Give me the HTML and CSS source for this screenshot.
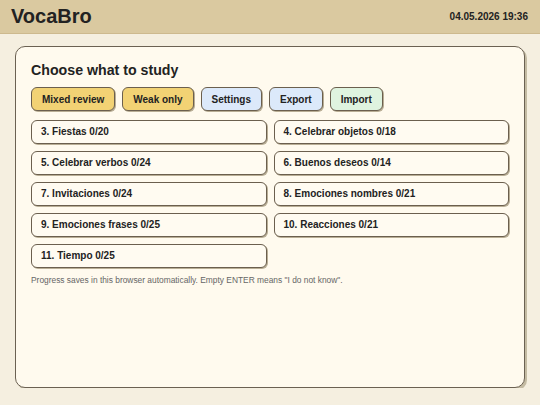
FILE: index.html
```html
<!DOCTYPE html>
<html lang="en">
<head>
    <meta charset="UTF-8">
    <title>VocaBro</title>
    <link rel="stylesheet" href="styles.css">
</head>
<body>
<div id="header">
    <h1>VocaBro</h1>
    <span id="clock">04.05.2026 19:36</span>
</div>
<div id="main">
    <div id="panel">
        <h2>Choose what to study</h2>
        <div id="actions">
            <button class="btn btn-yellow">Mixed review</button>
            <button class="btn btn-yellow">Weak only</button>
            <button class="btn btn-blue">Settings</button>
            <button class="btn btn-blue">Export</button>
            <button class="btn btn-green">Import</button>
        </div>
        <ul id="topics">
            <li>3. Fiestas 0/20</li>
            <li>4. Celebrar objetos 0/18</li>
            <li>5. Celebrar verbos 0/24</li>
            <li>6. Buenos deseos 0/14</li>
            <li>7. Invitaciones 0/24</li>
            <li>8. Emociones nombres 0/21</li>
            <li>9. Emociones frases 0/25</li>
            <li>10. Reacciones 0/21</li>
            <li>11. Tiempo 0/25</li>
        </ul>
        <p class="note">Progress saves in this browser automatically. Empty ENTER means "I do not know".</p>
    </div>
</div>
</body>
</html>
```

FILE: styles.css
```css
*{
    padding: 0;
    margin: 0;
    box-sizing: border-box;
}
body{
    background: #f5efe0;
    font-family: "Liberation Sans", Arial, sans-serif;
    color: #222;
}
ul{
    list-style: none;
}
#header{
    height: 34px;
    background: #dac9a0;
    border-bottom: 1px solid #cdb98e;
    display: flex;
    align-items: center;
    justify-content: space-between;
    padding: 0 12px 0 11px;
}
#header h1{
    font-size: 20px;
    font-weight: bold;
    color: #222;
}
#clock{
    font-size: 10px;
    font-weight: bold;
}
#main{
    padding: 12px 15px 0 15px;
}
#panel{
    height: 342px;
    background: #fffaee;
    border: 1px solid #6b6152;
    border-radius: 10px;
    box-shadow: 2px 2px 0 #c4bba3;
    padding: 14px 15px;
}
#panel h2{
    font-size: 14.2px;
    font-weight: bold;
    line-height: 18px;
    margin-bottom: 8px;
}
#actions{
    display: flex;
    gap: 7px;
    margin-bottom: 9px;
}
.btn{
    font-family: "Liberation Sans", Arial, sans-serif;
    font-size: 10px;
    font-weight: bold;
    color: #222;
    height: 24px;
    padding: 0 10px;
    border: 1px solid #6b5f4e;
    border-radius: 6px;
    box-shadow: 1px 1px 0 #b9ae95;
    cursor: pointer;
}
.btn-yellow{
    background: #f2d274;
}
.btn-blue{
    background: #dce9fa;
}
.btn-green{
    background: #dff3df;
}
#topics{
    display: grid;
    grid-template-columns: 1fr 1fr;
    column-gap: 7px;
    row-gap: 7px;
}
#topics li{
    height: 24px;
    line-height: 22px;
    padding: 0 9px;
    font-size: 10px;
    font-weight: bold;
    background: #fffbf1;
    border: 1px solid #6b5f4e;
    border-radius: 6px;
    box-shadow: 1px 1px 0 #b9ae95;
    cursor: pointer;
}
.note{
    margin-top: 7px;
    font-size: 8.4px;
    color: #666;
}
```
